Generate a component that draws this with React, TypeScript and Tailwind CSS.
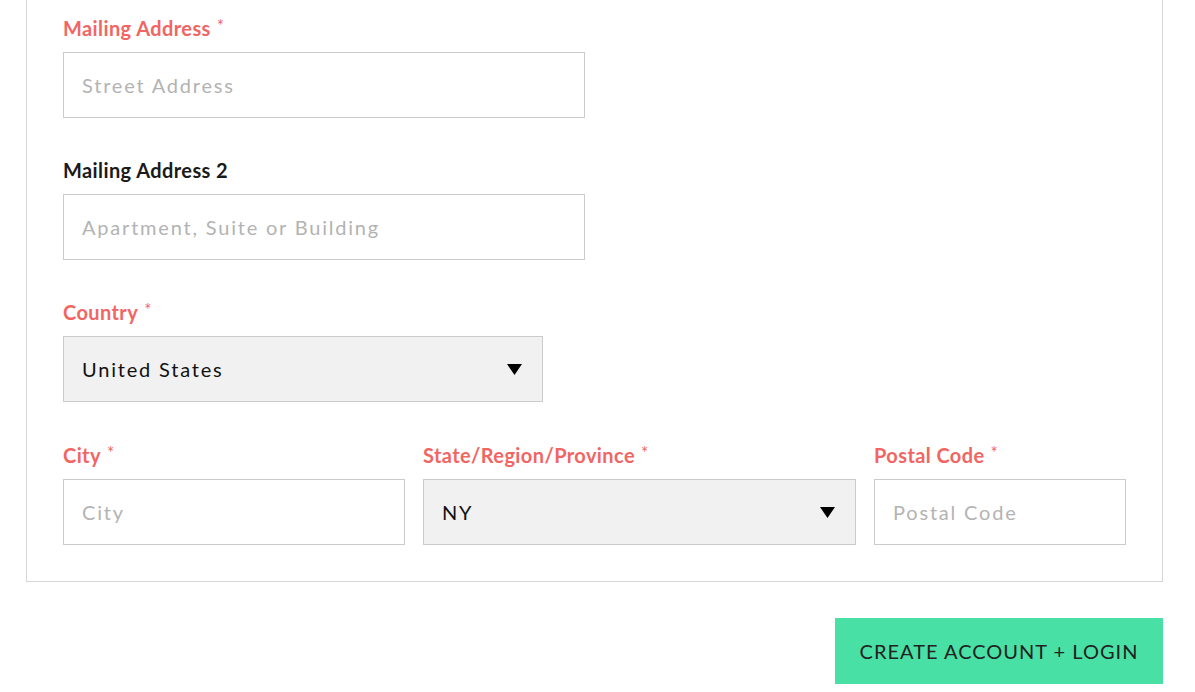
import { ReactNode } from "react"

const font = { fontFamily: "Lato, 'Open Sans', sans-serif" }

const Label = ({ children, required = true }: { children: ReactNode; required?: boolean }) => (
  <label
    className={`flex items-start h-6 mb-3 text-[20px] leading-6 font-bold tracking-[0.02em] ${
      required ? "text-[#f16663]" : "text-[#1a1a1a]"
    }`}
  >
    {children}
    {required && <span className="ml-1.5 text-[17px] leading-5 font-normal text-[#f16663]">*</span>}
  </label>
)

const TextInput = ({ placeholder, className = "" }: { placeholder: string; className?: string }) => (
  <input
    type="text"
    placeholder={placeholder}
    className={`h-[66px] border border-[#cbcbcb] bg-white px-[18px] text-[20px] tracking-[0.09em] text-[#222] placeholder:text-[#b3b3b3] outline-none ${className}`}
    style={font}
  />
)

const SelectBox = ({ value, className = "" }: { value: string; className?: string }) => (
  <div
    className={`h-[66px] border border-[#cbcbcb] bg-[#f1f1f1] pl-[18px] pr-[20px] flex items-center justify-between ${className}`}
  >
    <span className="text-[20px] tracking-[0.09em] text-[#111]">{value}</span>
    <svg width="15" height="11" viewBox="0 0 15 11">
      <path d="M0 0 H15 L7.5 11 Z" fill="#000" />
    </svg>
  </div>
)

export default function App() {
  return (
    <div className="min-h-screen bg-white" style={font}>
      <div className="ml-[26px] w-[1137px] border-x border-b border-[#d6d6d6] px-9 pt-4 pb-9">
        <div className="mb-10">
          <Label>Mailing Address</Label>
          <TextInput placeholder="Street Address" className="w-[522px] block" />
        </div>
        <div className="mb-10">
          <Label required={false}>Mailing Address 2</Label>
          <TextInput placeholder="Apartment, Suite or Building" className="w-[522px] block" />
        </div>
        <div className="mb-[41px]">
          <Label>Country</Label>
          <SelectBox value="United States" className="w-[480px]" />
        </div>
        <div className="flex gap-[18px]">
          <div className="w-[342px]">
            <Label>City</Label>
            <TextInput placeholder="City" className="w-full block" />
          </div>
          <div className="w-[433px]">
            <Label>State/Region/Province</Label>
            <SelectBox value="NY" />
          </div>
          <div className="w-[252px]">
            <Label>Postal Code</Label>
            <TextInput placeholder="Postal Code" className="w-full block" />
          </div>
        </div>
      </div>
      <div className="ml-[26px] w-[1137px] flex justify-end mt-9">
        <button className="h-[66px] w-[328px] bg-[#48e0a4] text-[20px] text-[#222] tracking-[0.05em] uppercase">
          Create Account + Login
        </button>
      </div>
    </div>
  )
}
